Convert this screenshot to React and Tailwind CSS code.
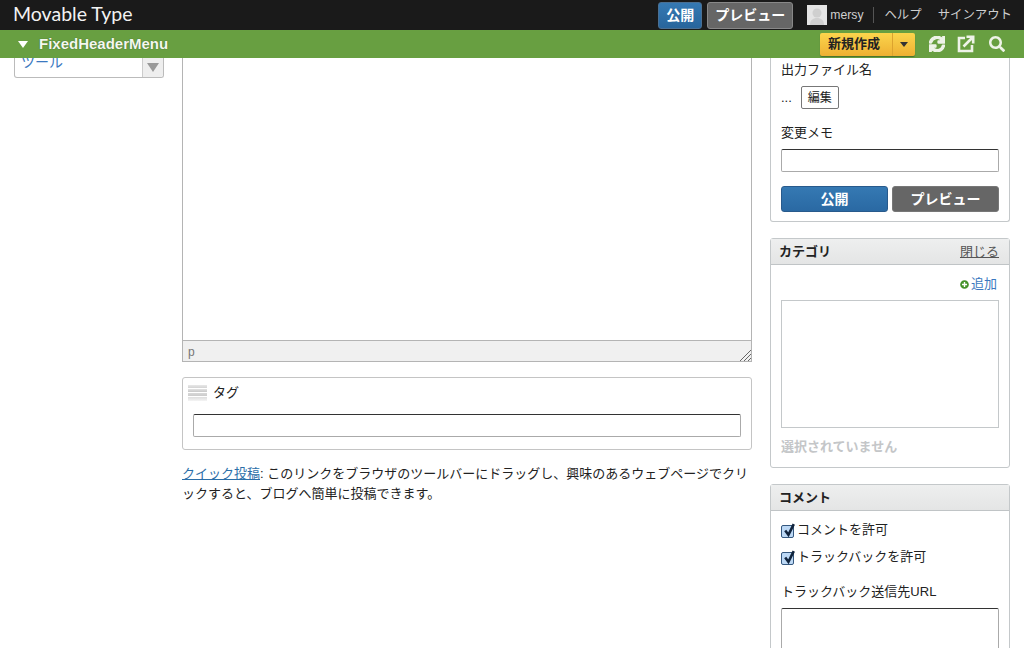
import { FaSearch, FaSync, FaPlusCircle } from 'react-icons/fa'

const jp = "font-['Liberation_Sans','Noto_Sans_CJK_JP',sans-serif]"

function TopBar() {
  return (
    <div className="flex h-[30px] items-center bg-[#1a1a1a] pl-[13px] pr-[12px]">
      <span className="-mt-[3px] font-['Lato',sans-serif] text-[19.5px] leading-[30px] text-[#f2f2f2]">Movable Type</span>
      <div className="ml-auto flex items-center">
        <button className="flex h-[27px] w-[44px] items-center justify-center rounded-[3px] border border-[#4a6f92] bg-gradient-to-b from-[#3579b3] to-[#28659c] text-[14px] font-bold text-white">
          公開
        </button>
        <button className="ml-[5px] flex h-[27px] w-[86px] items-center justify-center rounded-[3px] border border-[#888] bg-[#666] text-[14px] font-bold text-white">
          プレビュー
        </button>
        <div className="ml-[14px] h-[20px] w-[20px] overflow-hidden bg-[#e4e4e4]">
          <svg viewBox="0 0 20 20" className="h-full w-full">
            <circle cx="10" cy="8" r="4.5" fill="#cfcfcf" />
            <path d="M3 20c0-5 3-7 7-7s7 2 7 7z" fill="#cfcfcf" />
          </svg>
        </div>
        <span className="ml-[3px] font-['Liberation_Sans',sans-serif] text-[12.2px] text-[#d0d0d0]">mersy</span>
        <div className="ml-[10px] h-[16px] w-px bg-[#555]" />
        <span className="ml-[10px] text-[12.4px] text-[#cfcfcf]">ヘルプ</span>
        <span className="ml-[16px] text-[12.4px] text-[#cfcfcf]">サインアウト</span>
      </div>
    </div>
  )
}

function GreenBar() {
  return (
    <div className="flex h-[28px] items-center bg-[#689f41] pl-[18px] pr-[19px]">
      <div className="h-0 w-0 border-x-[5px] border-t-[7px] border-x-transparent border-t-white" />
      <span className="ml-[11px] font-['Liberation_Sans',sans-serif] text-[15px] font-bold text-[#f4f8ee] [text-shadow:0_0_1px_#2f4f1f]">
        FixedHeaderMenu
      </span>
      <div className="ml-auto flex h-[23px] w-[95px] rounded-[2px] bg-gradient-to-b from-[#fbd54c] to-[#eeb032] shadow-[0_1px_1px_rgba(0,0,0,0.3)]">
        <span className="flex w-[72px] items-center justify-center pr-[4px] text-[13px] font-bold text-[#222]">新規作成</span>
        <span className="flex flex-1 items-center justify-center border-l border-[#dca32e]">
          <span className="h-0 w-0 border-x-[4px] border-t-[5px] border-x-transparent border-t-[#333]" />
        </span>
      </div>
      <FaSync className="ml-[14px] text-[16px] text-[#eef3e8]" stroke="currentColor" strokeWidth="40" />
      <svg viewBox="0 0 18 18" className="ml-[12px] h-[18px] w-[18px]" fill="none" stroke="#eef3e8" strokeWidth="2.6">
        <path d="M8 3H2v13h13v-6" />
        <path d="M6.5 11.5 15 3M9.5 1.8h6.7v6.7" />
      </svg>
      <FaSearch className="ml-[14px] text-[16px] text-[#eef3e8]" />
    </div>
  )
}

function Sidebar() {
  return (
    <div className="w-[150px] shrink-0">
      <div className="flex h-[20px] overflow-hidden rounded-b-[3px] border border-t-0 border-[#bbb]">
        <span className="-mt-[6px] flex-1 pl-[6px] text-[14px] leading-[20px] text-[#3a78c0]">ツール</span>
        <span className="flex w-[21px] items-center justify-center border-l border-[#ccc] bg-[#eee]">
          <span className="h-0 w-0 border-x-[6px] border-t-[9px] border-x-transparent border-t-[#999]" />
        </span>
      </div>
    </div>
  )
}

function Editor() {
  return (
    <div className="w-[570px] shrink-0 text-[13px] leading-[20px] text-[#222]">
      <div className="border-x border-b border-[#b4b4b4]">
        <div className="h-[282px] bg-white" />
        <div className="relative h-[21px] border-t border-[#b4b4b4] bg-[#f0f0f0] pl-[5px] text-[12px] leading-[22px] text-[#777]">
          p
          <svg viewBox="0 0 12 12" className="absolute bottom-0 right-0 h-[12px] w-[12px]" stroke="#666" strokeWidth="1">
            <path d="M1 12 12 1M5 12l7-7M9 12l3-3" />
          </svg>
        </div>
      </div>
      <div className="mt-[15px] h-[73px] rounded-[3px] border border-[#c4c4c4] px-[10px]">
        <div className="-ml-[5px] flex h-[29px] items-center">
          <div className="mt-[1px] h-[16px] w-[19px] bg-[linear-gradient(to_bottom,#e8e8e8_0,#d4d4d4_3px,#fff_3px,#fff_4px,#e2e2e2_4px,#c8c8c8_7px,#fff_7px,#fff_8px,#d8d8d8_8px,#ccc_11px,#fff_11px,#fff_12px,#ddd_12px,#f4f4f4_16px)]" />
          <span className="ml-[6px]">タグ</span>
        </div>
        <div className="mt-[7px] h-[23px] rounded-[2px] border border-[#aaa] border-t-[#333]" />
      </div>
      <p className="mt-[14px]">
        <a className="text-[#2b6ea8] underline">クイック投稿</a>: このリンクをブラウザのツールバーにドラッグし、興味のあるウェブページでクリックすると、ブログへ簡単に投稿できます。
      </p>
    </div>
  )
}

function CardHeader({ title, right }) {
  return (
    <div className="flex h-[26px] items-center justify-between border-b border-[#c0c4c6] bg-gradient-to-b from-[#eeefef] to-[#e4e5e5] px-[8px] pr-[10px]">
      <span className="font-bold text-[#222]">{title}</span>
      {right && <span className="text-[#555] underline">{right}</span>}
    </div>
  )
}

function CheckRow({ label, className }) {
  return (
    <div className={`flex h-[20px] items-center ${className}`}>
      <span className="relative mt-[2px] h-[13px] w-[13px] rounded-[2px] border border-[#35587f] bg-[#bcd8f5]">
        <svg viewBox="0 0 14 14" className="absolute -top-[3px] left-0 h-[15px] w-[15px]" fill="none" stroke="#10233c" strokeWidth="2.4">
          <path d="M3 7l3 4 5-10" />
        </svg>
      </span>
      <span className="ml-[3px]">{label}</span>
    </div>
  )
}

function RightColumn() {
  return (
    <div className="flex w-[240px] shrink-0 flex-col gap-[16px] text-[13px] leading-[20px] text-[#222]">
      <div className="h-[164px] rounded-b-[3px] border-x border-b border-[#c4c8ca] px-[10px]">
        <div className="mt-[2px]">出力ファイル名</div>
        <div className="mt-[6px] flex h-[23px] items-center">
          <span>...</span>
          <span className="ml-[9px] flex h-[23px] w-[38px] items-center justify-center rounded-[2px] border border-[#777] text-[12px]">編集</span>
        </div>
        <div className="mt-[14px]">変更メモ</div>
        <div className="mt-[6px] h-[23px] rounded-[2px] border border-[#aaa] border-t-[#333]" />
        <div className="mt-[14px] flex gap-[4px]">
          <button className="h-[26px] flex-1 rounded-[3px] border border-[#285a8c] bg-gradient-to-b from-[#3579b3] to-[#2a69a3] text-[14px] font-bold text-white">公開</button>
          <button className="h-[26px] flex-1 rounded-[3px] border border-[#777] bg-[#666] text-[14px] font-bold text-white">プレビュー</button>
        </div>
      </div>
      <div className="h-[230px] rounded-[3px] border border-[#c4c8ca]">
        <CardHeader title="カテゴリ" right="閉じる" />
        <div className="px-[10px]">
          <div className="mt-[9px] flex items-center justify-end pr-[2px] text-[#3a78c0]">
            <FaPlusCircle className="mr-[2px] text-[9px] text-[#45922a]" />
            追加
          </div>
          <div className="mt-[6px] h-[128px] border border-[#c4c8ca]" />
          <div className="mt-[9px] font-bold text-[#c4c6c8]">選択されていません</div>
        </div>
      </div>
      <div className="h-[200px] rounded-t-[3px] border border-[#c4c8ca]">
        <CardHeader title="コメント" />
        <div className="px-[10px]">
          <CheckRow label="コメントを許可" className="mt-[9px]" />
          <CheckRow label="トラックバックを許可" className="mt-[7px]" />
          <div className="mt-[15px]">トラックバック送信先URL</div>
          <div className="mt-[6px] h-[60px] rounded-[2px] border border-[#aaa] border-t-[#333]" />
        </div>
      </div>
    </div>
  )
}

export default function App() {
  return (
    <div className={`h-[648px] w-[1024px] overflow-hidden bg-white ${jp}`}>
      <TopBar />
      <GreenBar />
      <div className="flex gap-[18px] pl-[14px]">
        <Sidebar />
        <Editor />
        <RightColumn />
      </div>
    </div>
  )
}
